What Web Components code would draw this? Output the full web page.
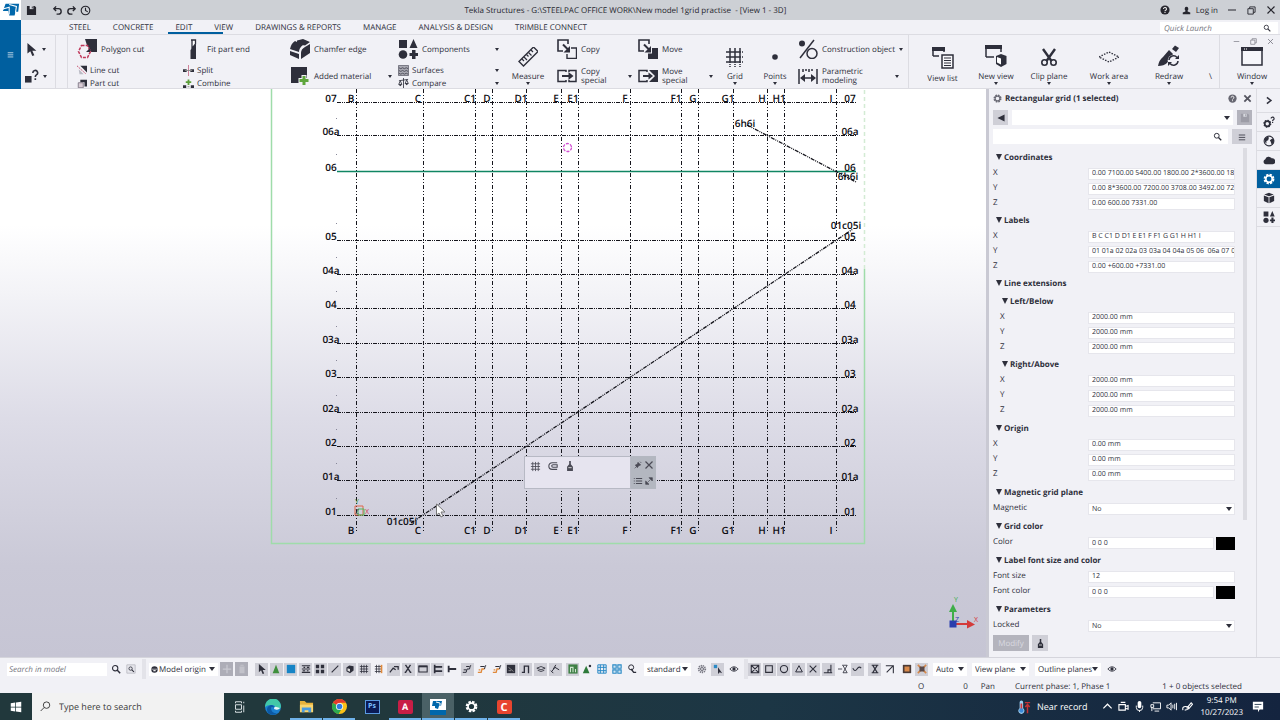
<!DOCTYPE html>
<html lang="en">
<head>
<meta charset="utf-8">
<title>Tekla Structures</title>
<style>
  body {
    margin: 0;
    font-family: "Open Sans", "Noto Sans", sans-serif;
    font-size: 8px;
    text-rendering: geometricPrecision;
    color: #33343f;
    --ink: #2e2f3b;
    --blue: #005f9f;
    --chrome: #f1f1f6;
    --line: #dcdce2;
    --pressed: #cfcfd7;
  }
</style>
</head>
<body>
<app-shell></app-shell>

<script>
// name: [viewBox size, markup]
const ICONS = {
  save: [12, '<path d="M1 1h8.5L11 2.5V11H1z" fill="currentColor"/><path d="M4 1h4v3.5H4z" fill="#d8dae0"/><path d="M6.3 1.5h1v2.300h-1z" fill="currentColor"/>'],
  undo: [12, '<path d="M2 4h5a3 3 0 0 1 0 6H5M4.500 1.500 2 4l2.500 2.500" fill="none" stroke="currentColor" stroke-width="1.500"/>'],
  redo: [12, '<path d="M10 4H5a3 3 0 0 0 0 6h2M7.500 1.500 10 4 7.500 6.500" fill="none" stroke="currentColor" stroke-width="1.500"/>'],
  clock: [12, '<circle cx="6" cy="6" r="4.700" fill="none" stroke="currentColor" stroke-width="1.200"/><path d="M6 3v3l2.500 1.500" fill="none" stroke="currentColor" stroke-width="1.200"/>'],
  help: [12, '<circle cx="6" cy="6" r="5.500" fill="currentColor"/><path d="M4.200 4.800a1.800 1.800 0 1 1 2.500 1.600Q6 6.700 6 7.400M6 8.300v1.300" fill="none" stroke="#eee" stroke-width="1.300"/>'],
  user: [12, '<path d="M6 1a2.500 2.800 0 0 1 1.500 5v1.200L11 8.500V11H1V8.500l3.500-1.300V6A2.500 2.800 0 0 1 6 1z" fill="currentColor"/>'],
  min: [10, '<path d="M1 5h8" stroke="currentColor"/>'],
  restore: [10, '<path d="M1 3h6v6H1zM3 3V1h6v6H7" fill="none" stroke="currentColor"/>'],
  close: [10, '<path d="m1.500 1.500 7 7m0-7-7 7" stroke="currentColor" stroke-width="1.200"/>'],
  closeBold: [10, '<path d="m1.500 1.500 7 7m0-7-7 7" stroke="currentColor" stroke-width="2"/>'],
  search: [12, '<circle cx="5" cy="5" r="3.200" fill="none" stroke="currentColor" stroke-width="1.300"/><path d="m7.300 7.300 3.700 3.700" stroke="currentColor" stroke-width="1.800"/>'],
  searchBox: [12, '<path d="M1 1h10v10H1z" fill="#e6e6ec" stroke="#b9b9c2"/><circle cx="5.500" cy="5.500" r="2" fill="none" stroke="currentColor"/><path d="m7 7 2.500 2.500" stroke="currentColor" stroke-width="1.300"/>'],
  menu: [10, '<path d="M1 2.500h8M1 5.500h8M1 8.500h8" stroke="currentColor"/>'],
  cursor: [16, '<path d="M3 0v13l3.500-3 2.500 6 2.500-1-2.500-5.500H14z" fill="currentColor"/>'],
  inquire: [16, '<path d="M0 8h7.500v7.500H0z" fill="currentColor"/><path d="M9 4.500a2.700 2.700 0 1 1 4 2.200q-1.200.8-1.200 2.300M11.800 10.500v2" fill="none" stroke="currentColor" stroke-width="1.900"/>'],
  polygon: [20, '<path d="M8 0h12v13h-8z" fill="currentColor"/><path d="M4.500 6.500h6l3 6-3 6h-6l-3-6z" fill="#f1f1f6" stroke="#c0375a" stroke-width="1.500" stroke-dasharray="3 1.200"/><path d="m9 13 4-4v4z" fill="currentColor"/>'],
  lineCut: [12, '<path d="M4 1h8v8z" fill="currentColor"/><path d="m2 5 6 6H3z" fill="#b9bac4"/><path d="m0 1 11 10" stroke="#c0375a" stroke-dasharray="2 1"/>'],
  partCut: [12, '<path d="M4 1h8v8H9V4H4z" fill="currentColor"/><path d="M1.500 4.500h6v6h-6z" fill="#d9cdd6" stroke="#77707e"/>'],
  fit: [20, '<path d="M8 1h4.500v4L9 9.500V1" fill="#fff" stroke="currentColor" stroke-width="1.300"/><path d="M7.500 11 13 5v15H7.500z" fill="currentColor"/>'],
  split: [12, '<path d="M0 4.500h4v3H0zM8 4.500h4v3H8z" fill="currentColor"/><path d="M6 0v12" stroke="#c76b85" stroke-width=".9"/><path d="M2 6h8" stroke="#888"/>'],
  combine: [12, '<path d="M0 8h3.500v3H0zM8.500 8H12v3H8.500z" fill="currentColor"/><path d="M6 1.500v6M3 4.500h6" stroke="#5c9e3a" stroke-width="2"/><path d="M5 9.500h2" stroke="#888"/>'],
  chamfer: [20, '<path d="M7 1.500 13 0l7 3-5 3.500-8-2zM0 10q1-5.500 5-8l8 4q-4 3-4 7zM0 12l9 3v5l-9-4zM11 20v-6q0-4 4-6l5-3v9z" fill="currentColor"/>'],
  added: [20, '<path d="M1 1h16v16H1z" fill="currentColor"/><path d="M14 9v11M8.500 14.500h11" stroke="#f1f1f6" stroke-width="5"/><path d="M14 10v9M9.500 14.500h9" stroke="#5ea53c" stroke-width="3"/>'],
  components: [20, '<path d="M1 1h8v8H1zM15.500 0l4 9h-8zM14 11h3.500v3H20v3h-2.500v3H14v-3h-2.500v-3H14z" fill="currentColor"/><circle cx="5" cy="15.500" r="4.300" fill="currentColor"/>'],
  surfaces: [12, '<path d="M.5.500h11v11H.5z" fill="#aaaab3" stroke="#71717c"/><path d="m1 3 2 1 2-1 2 1 2-1 2 1M1 6l2 1 2-1 2 1 2-1 2 1M1 9l2 1 2-1 2 1 2-1 2 1" fill="none" stroke="#4a4a56"/>'],
  compare: [12, '<path d="M6 0v11M3 11.500h6M1 3l10-1.500M2.500 3 .8 7h3.400zM9.500 2 7.800 6h3.400z" fill="none" stroke="currentColor" stroke-width=".9"/><path d="M.5 7h4L2.500 9zM7.500 6h4l-2 2z" fill="currentColor"/>'],
  measure: [20, '<path d="M1 14.500 15.500 0 20 4.500 5.500 19z" fill="none" stroke="currentColor" stroke-width="1.400"/><path d="m4 12 2 2m0-4 3 3M8.500 7.500l2 2m0-4 3 3M13 3l2 2" stroke="currentColor" stroke-width="1.200"/>'],
  copy: [20, '<path d="M11 5V1H1v11h5" fill="none" stroke="currentColor" stroke-width="1.600"/><path d="M14 9h5.500v10.500H10V15" fill="none" stroke="currentColor" stroke-width="1.400"/><path d="m6 5.500 6 6" stroke="currentColor" stroke-width="2"/><path d="M13 7v6.500H6.500z" fill="currentColor"/>'],
  move: [20, '<path d="M11 5V1H1v11h5" fill="none" stroke="currentColor" stroke-width="1.600"/><path d="M10 14.500h4V9h6v11H10z" fill="currentColor"/><path d="m6 5.500 6 6" stroke="currentColor" stroke-width="2"/><path d="M13 7v6.500H6.500z" fill="currentColor"/>'],
  copySpecial: [20, '<path d="M9 6V4.500H1v11h8V14M12 6V4.500h7v11h-7V14" fill="none" stroke="currentColor" stroke-width="1.500"/><path d="M5 10h8" stroke="currentColor" stroke-width="2"/><path d="m11.500 6 5 4-5 4z" fill="currentColor"/>'],
  moveSpecial: [20, '<path d="M9 6V4.500H1v11h8V14" fill="none" stroke="currentColor" stroke-width="1.500"/><path d="M11 4h9v12h-9l6-6z" fill="currentColor"/><path d="M5 10h7" stroke="currentColor" stroke-width="2"/><path d="m10.500 6.500 4.500 3.500-4.500 3.500z" fill="currentColor"/>'],
  grid: [20, '<path d="M5 1v15M10 1v15M15 1v15M1 5h15M1 10h15M1 15h15" stroke="currentColor" stroke-width="1.500"/><path d="M17 5h2m-2 5h2m-2 5h2M5 17v3m5-3v3m5-3v3" stroke="currentColor" stroke-width="1.500" stroke-dasharray="1 1"/>'],
  point: [20, '<circle cx="10" cy="10" r="2.800" fill="currentColor"/>'],
  construction: [20, '<circle cx="4" cy="4.500" r="3" fill="currentColor"/><path d="M2 19 16 1" stroke="currentColor" stroke-width="1.500"/><circle cx="14" cy="14.500" r="5" fill="none" stroke="currentColor" stroke-width="1.500"/>'],
  parametric: [20, '<path d="M1 3v15M19 3v15M3 12h14" stroke="currentColor" stroke-width="1.500"/><path d="m7 8-5 4 5 4zM13 8l5 4-5 4z" fill="currentColor"/><path d="M5 6V3m3 2V3m3 3V3m3 2V3" stroke="currentColor" stroke-width="1.500"/>'],
  viewList: [22, '<path d="M1 9V1h11v4M1 9h6" fill="none" stroke="currentColor" stroke-width="1.500"/><path d="M0 0h13v4H0z" fill="currentColor"/><path d="M10 8h11v13H10z" fill="#f8f8fb" stroke="currentColor" stroke-width="1.500"/><path d="M12 11h7m-7 2.500h7M12 16h7m-7 2.500h7" stroke="currentColor"/>'],
  newView: [22, '<path d="M1 12V1h15v6M1 12h8" fill="none" stroke="currentColor" stroke-width="1.500"/><path d="M0 0h17v4H0z" fill="currentColor"/><path d="m16 9 5.500 2v8L16 22l-5-3v-8z" fill="currentColor"/><path d="m12 12 4 1.500v6l-4-2z" fill="#fff"/>'],
  clip: [20, '<path d="m4 2 8.500 12M16 2 7.500 14" stroke="currentColor" stroke-width="2.400"/><circle cx="5.500" cy="15.500" r="2.700" fill="none" stroke="currentColor" stroke-width="1.600"/><circle cx="14.500" cy="15.500" r="2.700" fill="none" stroke="currentColor" stroke-width="1.600"/>'],
  workArea: [20, '<path d="m0 10 10-5 10 5-10 5z" fill="none" stroke="currentColor" stroke-width="1.400" stroke-dasharray="1.500 1.300"/>'],
  redraw: [22, '<path d="M0 21q1-6 5-9l6-7 4 4-6 9q-3 3-9 3z" fill="currentColor"/><path d="m14 4 3-3.500L21 3l-3 4z" fill="currentColor"/><circle cx="15.500" cy="15.500" r="5.800" fill="#f1f1f6"/><path d="M11 15a4.500 4.500 0 0 1 8-2.500M20 16a4.500 4.500 0 0 1-8 2.500" fill="none" stroke="currentColor" stroke-width="1.500"/><path d="M21 10v4h-4zM10 21v-4h4z" fill="currentColor"/>'],
  window: [22, '<path d="M1 3h20v17H1z" fill="#f6f6fa" stroke="currentColor" stroke-width="1.500"/><path d="M0 2h22v4H0z" fill="currentColor"/><path d="M3 4h4" stroke="#fff" stroke-dasharray="1 1"/>'],
  gear: [14, '<circle cx="7" cy="7" r="5" fill="none" stroke="currentColor" stroke-width="2.600" stroke-dasharray="2.600 1.330"/><circle cx="7" cy="7" r="3.700" fill="none" stroke="currentColor" stroke-width="1.800"/>'],
  wheel: [12, '<circle cx="6" cy="6" r="4" fill="none" stroke="#777782" stroke-width="2" stroke-dasharray="1.500 .9"/><circle cx="6" cy="6" r="2" fill="none" stroke="#666671"/><path d="M2 6h8M6 2v8" stroke="#8a8a94" stroke-width=".7"/>'],
  gearHelp: [14, '<circle cx="5" cy="9" r="3" fill="none" stroke="currentColor" stroke-width="2"/><circle cx="5" cy="9" r="4" fill="none" stroke="currentColor" stroke-width="1.400" stroke-dasharray="1.600 1.500"/><path d="M9.500 3a1.700 1.700 0 1 1 2.500 1.500q-.8.5-.8 1.500M11.200 7v1.200" fill="none" stroke="currentColor" stroke-width="1.400"/>'],
  chevron: [14, '<path d="m5 3 5 4-5 4" fill="none" stroke="currentColor" stroke-width="2"/>'],
  globe: [14, '<circle cx="7" cy="7" r="5.700" fill="none" stroke="currentColor" stroke-width="1.300"/><path d="m2 4 3-2 2 1-1 3-2 1v3L2 8zM8 6l3-2 2 2-1 4-2 1-1-3z" fill="currentColor"/>'],
  cloud: [14, '<path d="M3 12a3 3 0 0 1-.3-5.800A4 4 0 0 1 10 5a3.300 3.300 0 0 1 1.500 7z" fill="currentColor"/>'],
  cube: [14, '<path d="m7 1 5.500 2L7 5 1.500 3zM1 4l5.500 2v7L1 10.500zM13 4 7.500 6v7L13 10.500z" fill="currentColor"/>'],
  block: [14, '<path d="m6 2 6 1v6l-5 4-5-3V5z" fill="currentColor"/><path d="m3.500 6 3.500 1v4L3.500 9.500z" fill="#ddd"/>'],
  back: [14, '<path d="M12 2v10L2 7z" fill="currentColor"/>'],
  bottle: [12, '<path d="M5 0h2v4l2.500 3v5h-7V7L5 4z" fill="currentColor"/><path d="M4 8h4" stroke="#eee"/>'],
  origin: [12, '<circle cx="6" cy="6" r="5.500" fill="currentColor"/><path d="M1 5.500h10" stroke="#fff"/><path d="M4 8h4" stroke="#fff" stroke-width="2"/>'],
  plus: [12, '<path d="M6 1v10M1 6h10" stroke="#c9c9d1" stroke-width="1.500"/>'],
  trash: [12, '<path d="M3 3h6v8H3zM4 1h4v1H4z" fill="#c2c2ca"/>'],
  cone: [12, '<path d="m6 1 4 10H2z" fill="#3f8f3c"/>'],
  coneDot: [12, '<path d="m5 2 4 9H1z" fill="#2e7a3a"/><circle cx="9.500" cy="2.500" r="1.500" fill="currentColor"/>'],
  blueBox: [12, '<path d="M1 1h10v10H1z" fill="#1684c6"/>'],
  waves: [12, '<path d="M1 2h10M1 6h10M1 10h10M3 4h2m2 0h3M2 8h3m2 0h2" stroke="currentColor" stroke-width="1.300"/>'],
  four: [12, '<path d="M1 1h4v4H1zM7 1h4v4H7zM1 7h4v4H1zM7 7h4v4H7z" fill="currentColor"/>'],
  line: [12, '<path d="M2 10 10 2" stroke="currentColor" stroke-width="1.300"/>'],
  miniGrid: [12, '<path d="M3 1v10M6 1v10M9 1v10M1 3h10M1 6h10M1 9h10" stroke="currentColor" stroke-width=".9"/>'],
  orangeGrid: [12, '<path d="M3 1v10M6 1v10M1 3h8M1 6h8M1 9h8" stroke="currentColor" stroke-width=".9"/><path d="M9 1v10" stroke="#e08a3c" stroke-width="2"/>'],
  weld: [12, '<path d="M1 10 5 5l3 2M6 3h5v4" fill="none" stroke="currentColor" stroke-width="1.500"/>'],
  scissors: [12, '<path d="m3 1 6 9M9 1 3 10M2 10h2m4 0h2" stroke="currentColor" stroke-width="1.600"/>'],
  frame: [12, '<path d="M1 2.500h10v7H1z" fill="none" stroke="currentColor" stroke-width="1.300"/><path d="M1 2h10v2H1z" fill="currentColor"/>'],
  joint: [12, '<path d="M2 1v10M2 3.500h9M2 8.500h9" stroke="currentColor" stroke-width="2"/>'],
  bolt: [12, '<path d="M2 2v8M2 6h9" stroke="currentColor" stroke-width="2.200"/>'],
  rebar: [12, '<path d="M1 10h4l1-4h3l1-4h1M2 7h3M5 3h4" fill="none" stroke="currentColor" stroke-width="1.200"/>'],
  rebarOrange: [12, '<path d="M1 10h4l1-4h3M2 7h2" fill="none" stroke="#e08a3c" stroke-width="1.600"/><path d="M9 6l1-4h1M4 3h5" fill="none" stroke="currentColor" stroke-width="1.200"/>'],
  darkBox: [12, '<path d="M1 1h10v10H1z" fill="currentColor"/><path d="m3 4 6 5M3 8h3" stroke="#999"/>'],
  magnet: [12, '<path d="M1 10h3V2.500h5V11" fill="none" stroke="currentColor" stroke-width="1.600"/>'],
  layers: [12, '<path d="m1 5 5-2 5 2-5 2zM2 7.500 6 9l4-1.500" fill="none" stroke="currentColor"/>'],
  dim: [12, '<path d="m2 9 4-5 5 3M1 8l3 3M7 1l-3 5" fill="none" stroke="currentColor" stroke-width="1.200"/>'],
  greenBox: [12, '<path d="M.5.500h11v11H.5z" fill="#3e7f45"/><path d="M3 10V4h3v6m3 0V6" stroke="#cfe5cf" fill="none" stroke-width="1.300"/>'],
  blueGrid: [12, '<path d="M1 1h10v10H1zM4 1v10M8 1v10M1 4h10M1 8h10" fill="none" stroke="#2b8ac6" stroke-width="1.200"/>'],
  blueFour: [12, '<path d="M1 1h4v4H1zM7 1h4v4H7zM1 7h4v4H1zM7 7h4v4H7z" fill="#cfe4f2" stroke="#2b8ac6" stroke-width="1.300"/>'],
  phase: [12, '<circle cx="5" cy="4" r="3" fill="none" stroke="currentColor" stroke-width="1.200"/><path d="m5 6 3 4h3" fill="none" stroke="currentColor" stroke-width="1.600"/>'],
  pick: [12, '<path d="M1 1h4v4H1z" fill="#2b8ac6"/><path d="M6 4v8l2-2 3 1z" fill="currentColor"/>'],
  eye: [12, '<path d="M1 6q5-5.500 10 0-5 5.500-10 0z" fill="none" stroke="currentColor"/><circle cx="6" cy="6" r="2" fill="currentColor"/>'],
  boxX: [12, '<path d="M1.500 1.500h9v9h-9zM2 2l8 8m0-8-8 8" fill="none" stroke="currentColor" stroke-width="1.300"/>'],
  box: [12, '<path d="M2 2h8v8H2z" fill="none" stroke="currentColor" stroke-width="1.300"/>'],
  ring: [12, '<circle cx="6" cy="6" r="4.300" fill="none" stroke="currentColor" stroke-width="1.300"/>'],
  tri: [12, '<path d="m6 2 4 7.500H2z" fill="none" stroke="currentColor" stroke-width="1.200"/>'],
  cross: [12, '<path d="m2 2 8 8m0-8-8 8" stroke="currentColor" stroke-width="1.300"/>'],
  corner: [12, '<path d="M1 10.500h10M9.500 1v9M6 10V7h3" fill="none" stroke="currentColor" stroke-width="1.300"/>'],
  near: [12, '<path d="M0 6h5M5 1.500h6L6 10.500h5L6 2" fill="none" stroke="currentColor"/>'],
  curve: [12, '<path d="M1 5q2.500 5 5 1t5-1" fill="none" stroke="currentColor" stroke-width="1.300"/>'],
  glass: [12, '<path d="M2 1.500h8M2 10.500h8M3.500 2l5 8m0-8-5 8" fill="none" stroke="currentColor" stroke-width="1.400"/>'],
  arrowUp: [12, '<path d="M1 2h9v9M10 2l-8 8" fill="none" stroke="currentColor" stroke-width="1.300"/>'],
  orangeBox: [12, '<path d="M1 1h10v10H1z" fill="#4a3a36"/><path d="M3 3h6v6H3z" fill="#d9894a"/>'],
  orangeX: [12, '<path d="m1 1 10 10m0-10L1 11" stroke="#d9894a" stroke-width="2"/><path d="M3 3h6v6H3z" fill="#5a4a4a"/>'],
  pin: [12, '<path d="m1 11 4-4M6 2l4 4-3 1-2 3-3-4 3-1zM9 1l2 2" fill="currentColor" stroke="currentColor"/>'],
  list: [12, '<path d="M1 3h1m1.500 0H11M1 6h1m1.500 0H11M1 9h1m1.500 0H11" stroke="currentColor" stroke-width="1.200"/>'],
  expand: [12, '<path d="M6 1h5v5zM1 6l5 5H1zM4 8l4-4" fill="currentColor" stroke="currentColor"/>'],
  clamp: [12, '<path d="M11 2H5a4 4 0 0 0 0 8h6M11 4.500H6a1.500 1.500 0 0 0 0 3h5z" fill="none" stroke="currentColor" stroke-width="1.300"/>'],
  tekla: [20, '<path d="M4 3h15l-1 9h-3l-1 4H8l-1-5H1z" fill="#0067ab"/><path d="m8 4 8 2-1 7M1 9l7-2v8" fill="none" stroke="#fff" stroke-width="1.200"/>'],
  win: [16, '<path d="m1 3 6-1v5.500H1zM8 2l7-1v6.500H8zM1 8.500h6V14l-6-1zM8 8.500h7V15l-7-1z" fill="#fff"/>'],
  taskView: [16, '<path d="M2 5h8v6H2zM2 3V1h8v2M2 13v2h8v-2M13 1v2m0 3v9" fill="none" stroke="#e8eef0" stroke-width="1.200"/>'],
  taskSearch: [16, '<circle cx="9.500" cy="6" r="4.700" fill="none" stroke="#222" stroke-width="1.200"/><path d="m6 9.500-5 5" stroke="#222" stroke-width="1.200"/>'],
  edge: [16, '<circle cx="8" cy="8" r="8" fill="#1b7fd0"/><path d="M0 8a8 8 0 0 1 16-1q0 4-5 3.500 0-5-5-4.500Q2 6 0 8z" fill="#42c8a8"/><path d="M6 9q0 5 6 5.500A8 8 0 0 1 3 14Q0 8 6 6q3 0 3 2.500Q6 7.500 6 9z" fill="#0c59a4"/><path d="M9 10q0-3 2.500-2L15 9q-2 3-6 1z" fill="#e9f6fa"/>'],
  folder: [16, '<path d="M1 2h5l2 2h7v10H1z" fill="#e8b23c"/><path d="M1 6h14v8H1z" fill="#fad56e"/><path d="M3 9h10v5h-3v-2H6v2H3z" fill="#4a9be0"/>'],
  chrome: [16, '<circle cx="8" cy="8" r="8" fill="#fbc116"/><path d="M8 8 1 4a8 8 0 0 0 6 12l4-7z" fill="#2da94f"/><path d="M1 4a8 8 0 0 1 14 0H8v4z" fill="#e33b2e"/><circle cx="8" cy="8" r="3.800" fill="#fff"/><circle cx="8" cy="8" r="3" fill="#2f7de1"/>'],
  teklaTask: [16, '<path d="M0 0h16v16H0z" fill="#fff"/><path d="M0 11h16v5H0z" fill="#0067ab"/><path d="M3 2h9l-1 5H9l-1 3-3-1V7H2z" fill="#0067ab"/><path d="m6 3 4 1v4" fill="none" stroke="#fff"/>'],
  thermo: [16, '<path d="M3 2.500a2 2 0 0 1 4 0v7a3.500 3.500 0 1 1-4 0z" fill="#9fd0f2"/><path d="M5 4v8" stroke="#d3373a" stroke-width="2"/><circle cx="5" cy="12" r="2.500" fill="#3c8ad8"/><path d="M9 3h6M12 15V5M9.500 8 12 5l2.500 3" fill="none" stroke="#c43236" stroke-width="1.700"/>'],
  up: [12, '<path d="m1.500 8 4.500-4.500L10.500 8" fill="none" stroke="currentColor" stroke-width="1.300"/>'],
  cam: [12, '<path d="M1 4h7v6H1zM8 6l3-1v4L8 8M3 1.500h5" fill="none" stroke="currentColor" stroke-width="1.200"/>'],
  mic: [12, '<rect x="4" width="4" height="8" rx="2" fill="currentColor"/><path d="M2.500 5v2a3.500 3.500 0 0 0 7 0V5M6 10v2" fill="none" stroke="currentColor"/>'],
  net: [12, '<path d="M3 2h8.500v6.500H3M1 4h3v3H1zM2 7v4m3 0h5" fill="none" stroke="currentColor"/>'],
  sound: [12, '<path d="M1 4.500h2L5.500 2v8L3 7.500H1zM7.500 4v4M9.500 3v6M11.500 2v8" fill="none" stroke="currentColor"/>'],
  pen: [12, '<path d="M1 10q-1-4 3-4t3 2-4 2M5 8l5-6 1.500 1.500L7 9" fill="none" stroke="currentColor" stroke-width="1.200"/>'],
  note: [14, '<path d="M1 1h12v9H9l-2 3v-3H1z" fill="currentColor"/><path d="M3 4h8M3 7h5" stroke="#1a2f45"/>'],
};

const icon = (name, size = 12, color = '') => {
  const [box, body] = ICONS[name];
  return `<svg width="${size}" height="${size}" viewBox="0 0 ${box} ${box}" aria-hidden="true"${color ? ` style="color:${color}"` : ''}>${body}</svg>`;
};

const CARET = '<svg class="caret" width="6" height="4" viewBox="0 0 6 4" aria-hidden="true"><path d="M0 0h6L3 4z" fill="currentColor"/></svg>';
const SMALL_CARET = '<svg class="caret" width="4" height="3" viewBox="0 0 4 3" aria-hidden="true"><path d="M0 0h4L2 3z" fill="currentColor"/></svg>';

const BASE = `
  *, *::before { box-sizing: border-box; }
  svg { display: block; flex: none; }
  button, input, select {
    font: inherit;
    text-rendering: inherit;
    color: inherit;
    margin: 0;
    padding: 0;
    border: 0;
    border-radius: 0;
    background: none;
    min-width: 0;
  }
  button { display: flex; align-items: center; justify-content: center; white-space: nowrap; }
`;

const define = (name, render) => customElements.define(name, class extends HTMLElement {
  connectedCallback() {
    if (this.shadowRoot) return;
    this.attachShadow({ mode: 'open' }).innerHTML = `<style>${BASE}</style>${render(this)}`;
  }
});

define('drop-down', (el) => `
  <style>
    :host { display: grid; align-items: center; background: #fff; height: 13px; min-width: 0; }
    select { grid-area: 1 / 1; width: 100%; height: 100%; appearance: none; padding-left: var(--inset, 3px); }
    .caret { grid-area: 1 / 1; justify-self: end; margin-right: 3px; pointer-events: none; }
  </style>
  <select aria-label="${el.getAttribute('label')}"><option>${el.getAttribute('value') || ''}</option></select>
  ${CARET}
`);

define('title-bar', () => `
  <style>
    :host { display: flex; align-items: center; height: 20px; background: #cdd0d5; color: #26262e; }
    .logo { width: 21px; height: 20px; background: #fff; display: grid; place-items: center; }
    .quick { display: flex; gap: 3px; margin-left: 5px; }
    .quick button:first-child { margin-right: 12px; }
    h1 { flex: 1; margin: 0; text-align: center; font-size: 8px; font-weight: 400; white-space: pre; }
    .right { display: flex; align-items: center; gap: 10px; margin-right: 4px; }
    .login { gap: 5px; margin: 0 -1px 0 2px; }
  </style>
  <div class="logo">${icon('tekla', 18)}</div>
  <div class="quick">
    <button aria-label="Save">${icon('save', 11)}</button>
    <button aria-label="Undo">${icon('undo', 11)}</button>
    <button aria-label="Redo">${icon('redo', 11)}</button>
    <button aria-label="History">${icon('clock', 11)}</button>
  </div>
  <h1>Tekla Structures - G:\\STEELPAC OFFICE WORK\\New model 1grid practise  - [View 1 - 3D]</h1>
  <div class="right">
    <button aria-label="Help">${icon('help', 10)}</button>
    <button class="login">${icon('user', 9)}Log in</button>
    <button aria-label="Minimize">${icon('min', 10)}</button>
    <button aria-label="Restore">${icon('restore', 9)}</button>
    <button aria-label="Close">${icon('close', 10)}</button>
  </div>
`);

define('tab-bar', () => `
  <style>
    :host { display: flex; height: 15px; border-bottom: 1px solid var(--line); }
    nav { display: flex; flex: 1; padding-left: 37px; }
    a { padding: 0 11px; line-height: 16px; color: inherit; text-decoration: none; white-space: nowrap; }
    a.on { position: relative; }
    /* the marker is on its way to the hovered tab */
    a.on::after { content: ""; position: absolute; left: 4px; bottom: 0; width: 55px; height: 2px; background: var(--blue); }
    .launch { display: flex; align-items: center; width: 118px; height: 12px; margin: 2px 2px 0 0; padding: 0 7px 0 4px; background: #fff; }
    input { flex: 1; font-style: italic; }
    input::placeholder { color: #77777f; }
  </style>
  <nav>
    <a href="#steel">STEEL</a><a href="#concrete">CONCRETE</a><a href="#edit" class="on">EDIT</a><a href="#view">VIEW</a><a href="#drawings">DRAWINGS &amp; REPORTS</a><a href="#manage">MANAGE</a><a href="#analysis">ANALYSIS &amp; DESIGN</a><a href="#trimble">TRIMBLE CONNECT</a>
  </nav>
  <div class="launch"><input placeholder="Quick Launch" aria-label="Quick Launch">${icon('search', 8)}</div>
`);

define('ribbon-button', (el) => {
  const size = el.getAttribute('size') || 20;
  return `
  <style>
    :host { display: flex; min-width: 0; }
    button { flex: 1; gap: 4px; justify-content: flex-start; text-align: left; line-height: 9px; }
    .caret { margin-left: auto; }
    :host([big]) button { flex-direction: column; justify-content: flex-end; gap: 2px; padding-bottom: 4px; text-align: center; line-height: 10px; }
    :host([big]) svg:first-child { margin-bottom: 3px; }
    :host([big]) .caret { margin: -2px 0 0; }
    :host([big]:not([menu])) button { padding-bottom: 5px; }
    :host([small]) button { gap: 3px; }
  </style>
  <button>${icon(el.getAttribute('icon'), size)}<slot></slot>${el.hasAttribute('menu') ? SMALL_CARET : ''}</button>
`;
});

define('ribbon-column', (el) => `
  <style>
    :host {
      display: grid;
      grid-template-rows: 28px 26px;
      width: ${el.getAttribute('width')}px;
      padding: 0 ${el.getAttribute('end') || 3}px 0 ${el.getAttribute('start') || 5}px;
    }
    :host([three]) { grid-template-rows: 28px 14px 13px; }
    :host([single]) { grid-template-rows: 54px; padding: 0; }
    :host([rule]) { border-left: 1px solid var(--line); }
  </style>
  <slot></slot>
`);

define('tool-ribbon', () => `
  <style>
    :host { display: flex; height: 54px; border-bottom: 1px solid var(--line); overflow: hidden; }
    .gutter { width: 13px; border: solid var(--line); border-width: 0 1px; }
    .more { width: 17px; padding: 36px 0 0 7px; }
    .window { flex: 1; display: flex; flex-direction: column; padding-left: 4px; border-left: 1px solid var(--line); }
    .mdi { display: flex; justify-content: flex-end; gap: 10px; padding: 3px 6px 0 0; color: #7b7b85; }
    .window ribbon-button { flex: 1; align-self: center; }
  </style>
  <ribbon-column width="34" start="4" end="10">
    <ribbon-button icon="cursor" size="13" menu aria-label="Select"></ribbon-button>
    <ribbon-button icon="inquire" size="14" menu aria-label="Inquire"></ribbon-button>
  </ribbon-column>
  <div class="gutter"></div>
  <ribbon-column width="110" start="9" three>
    <ribbon-button icon="polygon">Polygon cut</ribbon-button>
    <ribbon-button icon="lineCut" size="10" small>Line cut</ribbon-button>
    <ribbon-button icon="partCut" size="10" small>Part cut</ribbon-button>
  </ribbon-column>
  <ribbon-column width="107" three>
    <ribbon-button icon="fit">Fit part end</ribbon-button>
    <ribbon-button icon="split" size="11" small>Split</ribbon-button>
    <ribbon-button icon="combine" size="11" small>Combine</ribbon-button>
  </ribbon-column>
  <ribbon-column width="108" end="1">
    <ribbon-button icon="chamfer">Chamfer edge</ribbon-button>
    <ribbon-button icon="added" menu>Added material</ribbon-button>
  </ribbon-column>
  <ribbon-column width="112" three end="6">
    <ribbon-button icon="components" menu>Components</ribbon-button>
    <ribbon-button icon="surfaces" size="11" small menu>Surfaces</ribbon-button>
    <ribbon-button icon="compare" size="11" small menu>Compare</ribbon-button>
  </ribbon-column>
  <ribbon-column width="46" single>
    <ribbon-button icon="measure" big menu>Measure</ribbon-button>
  </ribbon-column>
  <ribbon-column width="82" start="6" end="1">
    <ribbon-button icon="copy">Copy</ribbon-button>
    <ribbon-button icon="copySpecial" menu><span>Copy<br>special</span></ribbon-button>
  </ribbon-column>
  <ribbon-column width="82" end="2">
    <ribbon-button icon="move">Move</ribbon-button>
    <ribbon-button icon="moveSpecial" menu><span>Move<br>special</span></ribbon-button>
  </ribbon-column>
  <ribbon-column width="40" single>
    <ribbon-button icon="grid" big menu>Grid</ribbon-button>
  </ribbon-column>
  <ribbon-column width="40" single>
    <ribbon-button icon="point" big menu>Points</ribbon-button>
  </ribbon-column>
  <ribbon-column width="113" start="3" end="9">
    <ribbon-button icon="construction" menu>Construction object</ribbon-button>
    <ribbon-button icon="parametric" menu><span>Parametric<br>modeling</span></ribbon-button>
  </ribbon-column>
  <ribbon-column width="68" single rule>
    <ribbon-button icon="viewList" size="22" big>View list</ribbon-button>
  </ribbon-column>
  <ribbon-column width="40" single>
    <ribbon-button icon="newView" size="22" big menu>New view</ribbon-button>
  </ribbon-column>
  <ribbon-column width="66" single>
    <ribbon-button icon="clip" big menu>Clip plane</ribbon-button>
  </ribbon-column>
  <ribbon-column width="54" single>
    <ribbon-button icon="workArea" big menu>Work area</ribbon-button>
  </ribbon-column>
  <ribbon-column width="66" single>
    <ribbon-button icon="redraw" size="22" big menu>Redraw</ribbon-button>
  </ribbon-column>
  <div class="more">\\</div>
  <div class="window">
    <div class="mdi">
      <button aria-label="Minimize view">${icon('min', 7)}</button>
      <button aria-label="Restore view">${icon('restore', 7)}</button>
      <button aria-label="Close view">${icon('close', 7)}</button>
    </div>
    <ribbon-button icon="window" size="22" big menu>Window</ribbon-button>
  </div>
`);

const COLUMNS = [['B', 356], ['C', 423], ['C1', 475], ['D', 492], ['D1', 526], ['E', 561], ['E1', 578], ['F', 630], ['F1', 681], ['G', 698], ['G1', 733], ['H', 767], ['H1', 784], ['I', 836]];
const ROWS = [['07', 13], ['06a', 46], ['06', 82], ['05', 151], ['04a', 185], ['04', 219], ['03a', 254], ['03', 288], ['02a', 323], ['02', 357], ['01a', 391], ['01', 426]];

const modelView = () => {
  const text = (x, y, s) => `<text x="${x}" y="${y}">${s}</text>`;
  const cols = COLUMNS.map(([name, x]) => `<path d="M${x + .5} 0V444"/>`).join('');
  const rows = ROWS.map(([name, y]) => `<path class="${name === '06' ? 'picked' : ''}" d="M337 ${y + .5}H856"/>`).join('');
  const dots = ROWS.map(([name, y]) => `<path d="M336 ${y - 16.5}h1" style="stroke-dasharray:none;stroke:#889"/>`).join('');
  return `
    <svg width="100%" height="100%" role="img" aria-label="Grid view">
      <g fill="none" stroke="#9fdcaa" stroke-width="1.500">
        <path d="M271.500 0V454.500H864.500V180"/>
        <path d="M864.500 180V0" stroke="#d3ebd4" stroke-dasharray="4 3"/>
      </g>
      <g class="cols">${cols}</g>
      <g class="rows">${rows}${dots}
        <path class="slanted" d="M411 434 853 140M747 36 856 93"/>
      </g>
      <g class="labels">
        ${COLUMNS.map(([name, x]) => text(x - 5, 13, name) + text(x - 5, 445, name)).join('')}
        ${ROWS.map(([name, y]) => text(331, y, name) + text(850, y, name)).join('')}
        ${text(745, 38, '6h6i')}${text(848, 91, '6h6i')}${text(846, 140, '01c05i')}${text(402, 436, '01c05i')}
      </g>
      <circle cx="567.500" cy="58.500" r="4" fill="none" stroke="#d14fd1" stroke-width="1.300" stroke-dasharray="3 1.200"/>
      <g fill="none" stroke="#e0674a"><path d="M355 417h8v9h-8z"/><path d="M358 420h6v6h-6z" stroke="#4fb85a"/></g>
      <text class="tag" x="357" y="415" fill="#3c9a48">Y</text><text class="tag" x="367" y="425" fill="#cc3b50">X</text><text class="tag" x="357" y="425" fill="#555">Z</text>
      <path d="M436.500 415v11l2.500-2 2 4 2-1-2-4h4z" fill="#fff" stroke="#777"/>
      <g stroke-width="2"><path d="M953 535V522" stroke="#3fae49"/><path d="M953 535h14" stroke="#d43a3a"/></g>
      <path d="m949 523 4-8 4 8z" fill="#3fae49"/><path d="m967 531 8 4.500-8 4z" fill="#d43a3a"/><path d="M949.500 531.500h7v7h-7z" fill="#2b3fae"/>
      <text class="tag" x="956" y="513" fill="#3fae49">Y</text><text class="tag" x="976" y="533" fill="#d43a3a">X</text><text class="tag" x="957" y="533" fill="#2b3fae">Z</text>
    </svg>`;
};

define('model-view', () => `
  <style>
    :host { display: block; position: relative; flex: 1; overflow: hidden; background: linear-gradient(#fff 24%, #f3f3f7 36%, #dddce7 58%, #cac9d7 84%, #c6c5d4); }
    :host > svg { display: block; position: absolute; }
    .cols path { stroke: #15151c; stroke-dasharray: 4 2 1 2 1 2; }
    .rows path { fill: none; stroke: #15151c; stroke-dasharray: 4 1 1 1 1 1; }
    .rows .picked { stroke: #108663; stroke-width: 1.5; stroke-dasharray: none; }
    .rows .slanted { stroke-width: 1.3; }
    .labels { font-size: 10px; font-weight: 600; fill: #0c0c12; text-anchor: middle; }
    .tag { font-size: 7px; text-anchor: middle; }
    .mini { position: absolute; left: 524px; top: 367px; display: flex; width: 132px; height: 33px; color: #4a4a55; }
    .tools { flex: 1; display: flex; align-items: flex-start; gap: 7px; padding: 4px 5px; background: #e6e4ef; border: 1px solid #b7b9c4; }
    .side { display: grid; grid-template-columns: 10px 10px; place-content: center; gap: 6px 1px; width: 25px; background: #b3b7c0; }
  </style>
  ${modelView()}
  <div class="mini">
    <div class="tools">
      <button aria-label="Grid">${icon('miniGrid', 11)}</button>
      <button aria-label="Magnetic">${icon('clamp', 10)}</button>
      <button aria-label="Paint">${icon('bottle', 10)}</button>
    </div>
    <div class="side">
      <button aria-label="Pin">${icon('pin', 8)}</button>
      <button aria-label="Close">${icon('close', 10)}</button>
      <button aria-label="List">${icon('list', 10)}</button>
      <button aria-label="Expand">${icon('expand', 8)}</button>
    </div>
  </div>
`);

define('prop-row', (el) => {
  const value = el.getAttribute('value');
  const label = el.getAttribute('label');
  const field = el.hasAttribute('choice')
    ? `<div class="choice"><select id="f"><option>${value}</option></select>${CARET}</div>`
    : `<input id="f" value="${value}">`;
  return `
  <style>
    :host { display: grid; grid-template-columns: 95px 1fr; height: 15px; }
    :host([choice]), :host([swatch]) { height: 16px; }
    label { line-height: 13px; }
    .field { display: flex; align-items: center; gap: 2px; font-size: 7px; }
    input, .choice { flex: 1; height: 12px; background: #fff; padding-left: 3px; border: 1px solid #e6e6ec; }
    .choice { display: grid; align-items: center; }
    select { grid-area: 1 / 1; appearance: none; }
    .caret { grid-area: 1 / 1; justify-self: end; margin-right: 2px; pointer-events: none; }
    .swatch { width: 19px; height: 13px; background: #000; }
    :host([sub]) label { padding-left: 7px; }
  </style>
  <label for="f">${label}</label>
  <div class="field">${field}${el.hasAttribute('swatch') ? '<button class="swatch" aria-label="Pick color"></button>' : ''}</div>
`;
});

define('prop-section', (el) => `
  <style>
    :host { display: block; }
    h2 { display: flex; align-items: center; gap: 2px; height: 18px; margin: 0; padding-left: 3px; font-size: 8px; font-weight: 700; }
    :host([sub]) h2 { padding-left: 9px; }
  </style>
  <h2><svg width="6" height="6" viewBox="0 0 6 6" aria-hidden="true"><path d="M0 0h6L3 6z" fill="currentColor"/></svg>${el.getAttribute('heading')}</h2>
  <slot></slot>
`);

define('property-panel', () => `
  <style>
    :host { display: flex; flex-direction: column; width: 270px; border-left: 3px solid #c9c9d3; background: var(--chrome); padding: 0 4px; overflow: hidden; }
    .head { display: flex; align-items: center; gap: 3px; height: 18px; }
    .head b { flex: 1; font-weight: 700; }
    .head .close { margin-left: 3px; }
    .bar { display: flex; height: 16px; margin-top: 3px; gap: 4px; }
    .bar drop-down { flex: 1; height: 15px; }
    .bar button { width: 15px; background: var(--pressed); height: 15px; }
    .find { flex: 1; display: flex; align-items: center; height: 15px; background: #fff; padding: 0 6px; }
    .find input { flex: 1; }
    .bar .wide { width: 20px; }
    .scroll { display: flex; justify-content: space-between; margin-top: 3px; }
    .props { flex: 1; margin-right: 8px; }
    .thumb { width: 4px; height: 372px; margin-right: 5px; background: var(--line); }
    .gap { margin-bottom: 1px; }
    .foot { display: flex; gap: 3px; margin-top: 1px; }
    .foot button { width: 16px; height: 16px; background: var(--pressed); }
    .foot .modify { width: 36px; background: #b4b4bd; color: #d9d9e0; }
  </style>
  <div class="head">${icon('gear', 9, '#6b6b76')}<b>Rectangular grid (1 selected)</b>
    <button aria-label="Help">${icon('help', 9, '#666671')}</button>
    <button class="close" aria-label="Close">${icon('closeBold', 9, '#555560')}</button>
  </div>
  <div class="bar">
    <button aria-label="Back">${icon('back', 10)}</button>
    <drop-down label="Saved properties"></drop-down>
    <button aria-label="Save" style="background:#b4b4bd;color:#9c9ca6">${icon('save', 10)}</button>
  </div>
  <div class="bar">
    <div class="find"><input aria-label="Search properties">${icon('search', 9)}</div>
    <button class="wide" aria-label="Options">${icon('menu', 8)}</button>
  </div>
  <div class="scroll">
    <div class="props">
      <prop-section heading="Coordinates">
        <prop-row label="X" value="0.00 7100.00 5400.00 1800.00 2*3600.00 1800.00"></prop-row>
        <prop-row label="Y" value="0.00 8*3600.00 7200.00 3708.00 3492.00 7200.00"></prop-row>
        <prop-row label="Z" value="0.00 600.00 7331.00"></prop-row>
      </prop-section>
      <prop-section heading="Labels">
        <prop-row label="X" value="B C C1 D D1 E E1 F F1 G G1 H H1 I"></prop-row>
        <prop-row label="Y" value="01 01a 02 02a 03 03a 04 04a 05 06  06a 07 08"></prop-row>
        <prop-row label="Z" value="0.00 +600.00 +7331.00"></prop-row>
      </prop-section>
      <prop-section heading="Line extensions"></prop-section>
      <prop-section heading="Left/Below" sub>
        <prop-row sub label="X" value="2000.00 mm"></prop-row>
        <prop-row sub label="Y" value="2000.00 mm"></prop-row>
        <prop-row sub label="Z" value="2000.00 mm"></prop-row>
      </prop-section>
      <prop-section heading="Right/Above" sub class="gap">
        <prop-row sub label="X" value="2000.00 mm"></prop-row>
        <prop-row sub label="Y" value="2000.00 mm"></prop-row>
        <prop-row sub label="Z" value="2000.00 mm"></prop-row>
      </prop-section>
      <prop-section heading="Origin" class="gap">
        <prop-row label="X" value="0.00 mm"></prop-row>
        <prop-row label="Y" value="0.00 mm"></prop-row>
        <prop-row label="Z" value="0.00 mm"></prop-row>
      </prop-section>
      <prop-section heading="Magnetic grid plane">
        <prop-row label="Magnetic" value="No" choice></prop-row>
      </prop-section>
      <prop-section heading="Grid color">
        <prop-row label="Color" value="0 0 0" swatch></prop-row>
      </prop-section>
      <prop-section heading="Label font size and color">
        <prop-row label="Font size" value="12"></prop-row>
        <prop-row label="Font color" value="0 0 0" swatch></prop-row>
      </prop-section>
      <prop-section heading="Parameters">
        <prop-row label="Locked" value="No" choice></prop-row>
      </prop-section>
    </div>
    <div class="thumb"></div>
  </div>
  <div class="foot">
    <button class="modify">Modify</button>
    <button aria-label="Copy properties">${icon('bottle', 9)}</button>
  </div>
`);

define('side-tabs', () => `
  <style>
    :host { display: flex; flex-direction: column; width: 24px; border-left: 1px solid var(--line); }
    button { height: 19px; border-bottom: 1px solid var(--line); }
    button:first-of-type { height: 24px; }
    .on { background: var(--blue); color: #fff; }
  </style>
  <button aria-label="Collapse">${icon('chevron', 11)}</button>
  <button aria-label="Guide">${icon('gearHelp', 12)}</button>
  <button aria-label="Web">${icon('globe', 12)}</button>
  <button aria-label="Cloud">${icon('cloud', 12)}</button>
  <button class="on" aria-label="Properties">${icon('gear', 12)}</button>
  <button aria-label="Reference models">${icon('cube', 12)}</button>
  <button aria-label="Applications">${icon('components', 12)}</button>
`);

// a leading * marks a pressed toggle
const toggles = (names) => names.split(' ').map((n) => {
  const name = n.replace('*', '');
  return `<button aria-label="${name}" aria-pressed="${n !== name}">${icon(name, 10)}</button>`;
}).join('');

define('select-bar', () => `
  <style>
    :host { display: flex; align-items: center; height: 23px; border-top: 1px solid #d5d5dc; padding-left: 7px; }
    input { width: 100px; height: 13px; padding-left: 2px; background: #fff; font-style: italic; }
    input::placeholder { color: #77777f; }
    .search { display: flex; gap: 5px; margin: 0 6px 0 4px; }
    .rule { width: 4px; height: 20px; background: #e3e3e9; }
    .origin { display: flex; align-items: center; width: 69px; background: #fff; margin-left: 3px; padding-left: 2px; --inset: 1px; }
    drop-down { flex: none; }
    .origin drop-down { flex: 1; }
    .off { width: 13px; height: 14px; background: #adadb7; margin-left: 2px; }
    .set { display: flex; justify-content: space-between; }
    .set button { width: 13px; height: 13px; }
    [aria-pressed="true"] { background: var(--pressed); }
  </style>
  <input placeholder="Search in model" aria-label="Search in model">
  <div class="search">
    <button aria-label="Search">${icon('search', 10)}</button>
    <button aria-label="Search selection">${icon('searchBox', 10)}</button>
  </div>
  <div class="rule"></div>
  <div class="origin">${icon('origin', 7)}<drop-down label="Origin" value="Model origin"></drop-down></div>
  <button class="off" aria-label="Add">${icon('plus', 10)}</button>
  <button class="off" aria-label="Delete">${icon('trash', 10)}</button>
  <div class="set" style="width:307px;margin-left:7px">
    ${toggles('*cursor *cone *blueBox *waves *four *line *block *miniGrid orangeGrid *weld *scissors *frame *joint bolt *rebar rebarOrange rebarOrange *darkBox *magnet *layers *dim')}
  </div>
  <div class="set" style="width:72px;margin:0 6px 0 4px">${toggles('*greenBox coneDot blueGrid blueFour phase')}</div>
  <drop-down label="Filter" value="standard" style="width:47px"></drop-down>
  <div class="set" style="width:45px;margin:0 4px">${toggles('wheel *pick eye')}</div>
  <div class="rule"></div>
  <div class="set" style="width:116px">${toggles('*boxX *box *ring *tri *cross *corner near *curve')}</div>
  <div class="set" style="width:28px;margin:0 4px">${toggles('*glass arrowUp')}</div>
  <div class="set" style="width:28px;margin-right:5px">${toggles('orangeBox *orangeX')}</div>
  <drop-down label="Plane" value="Auto" style="width:34px;margin-right:5px"></drop-down>
  <drop-down label="View plane" value="View plane" style="width:57px;margin-right:6px"></drop-down>
  <drop-down label="Outline planes" value="Outline planes" style="width:66px;margin-right:4px"></drop-down>
  <div class="set">${toggles('eye')}</div>
`);

define('status-bar', () => `
  <style>
    :host { display: flex; height: 13px; padding-right: 38px; justify-content: flex-end; line-height: 14px; white-space: nowrap; }
    span { margin-left: 20px; }
    .o { margin-right: 19px; }
    .pan { margin-left: 13px; }
    .count { margin-left: 52px; }
  </style>
  <span class="o">O</span><span>0</span><span class="pan">Pan</span><span>Current phase: 1, Phase 1</span><span class="count">1 + 0 objects selected</span>
`);

define('task-bar', () => `
  <style>
    :host { display: flex; height: 27px; background: linear-gradient(90deg, #21383c 30%, #1c3645 60%, #14243f); color: #fff; }
    .start { width: 32px; }
    .find { display: flex; align-items: center; gap: 8px; width: 192px; padding-left: 8px; background: #f2f2f2; color: #333; font-size: 9px; }
    .find input { flex: 1; }
    .find input::placeholder { color: #3c3c3c; }
    .apps { display: flex; gap: 1px; }
    .apps button { width: 32px; }
    .apps .open { box-shadow: inset 0 -2px #6fb2ea; }
    .apps .on { background: #4a6166; }
    .tile { width: 15px; height: 14px; display: grid; place-items: center; font-size: 7px; font-weight: 700; }
    .ps { background: #0a1a55; color: #7cc0ff; border: 1px solid #5a9ae0; }
    .cad { background: #c81e46; border-radius: 2px; font-size: 9px; }
    .cam { background: #e8452f; border-radius: 2px; font-size: 11px; }
    .tray { display: flex; align-items: center; gap: 5px; margin-left: auto; }
    .weather { gap: 6px; font-size: 9px; margin-right: 9px; }
    .clock { margin-left: 3px; text-align: center; line-height: 12px; }
    .note { margin: 0 16px 0 4px; }
  </style>
  <button class="start" aria-label="Start">${icon('win', 12)}</button>
  <div class="find">${icon('taskSearch', 11)}<input placeholder="Type here to search" aria-label="Type here to search"></div>
  <div class="apps">
    <button aria-label="Task view">${icon('taskView', 12)}</button>
    <button aria-label="Edge">${icon('edge', 16)}</button>
    <button class="open" aria-label="Explorer">${icon('folder', 15)}</button>
    <button class="open" aria-label="Chrome">${icon('chrome', 15)}</button>
    <button><span class="tile ps">Ps</span></button>
    <button class="open"><span class="tile cad">A</span></button>
    <button class="open on" aria-label="Tekla Structures">${icon('teklaTask', 16)}</button>
    <button class="open" aria-label="Settings">${icon('gear', 13)}</button>
    <button class="open"><span class="tile cam">C</span></button>
  </div>
  <div class="tray">
    <button class="weather">${icon('thermo', 14)}Near record</button>
    <button aria-label="Hidden icons">${icon('up', 11)}</button>
    <button aria-label="Camera">${icon('cam', 11)}</button>
    <button aria-label="Microphone">${icon('mic', 11)}</button>
    <button aria-label="Network">${icon('net', 11)}</button>
    <button aria-label="Volume">${icon('sound', 11)}</button>
    <button aria-label="Pen">${icon('pen', 11)}</button>
    <div class="clock">9:54 PM<br>10/27/2023</div>
    <button class="note" aria-label="Notifications">${icon('note', 12)}</button>
  </div>
`);

define('app-shell', () => `
  <style>
    :host { display: flex; flex-direction: column; height: 100vh; background: var(--chrome); color: var(--ink); overflow: hidden; }
    .top { display: flex; }
    .file { width: 21px; background: var(--blue); color: #fff; }
    .bars { flex: 1; min-width: 0; }
    main { flex: 1; display: flex; min-height: 0; }
  </style>
  <title-bar></title-bar>
  <div class="top">
    <button class="file" aria-label="File menu">${icon('menu', 7)}</button>
    <div class="bars"><tab-bar></tab-bar><tool-ribbon></tool-ribbon></div>
  </div>
  <main>
    <model-view></model-view>
    <property-panel></property-panel>
    <side-tabs></side-tabs>
  </main>
  <select-bar></select-bar>
  <status-bar></status-bar>
  <task-bar></task-bar>
`);
</script>
</body>
</html>
